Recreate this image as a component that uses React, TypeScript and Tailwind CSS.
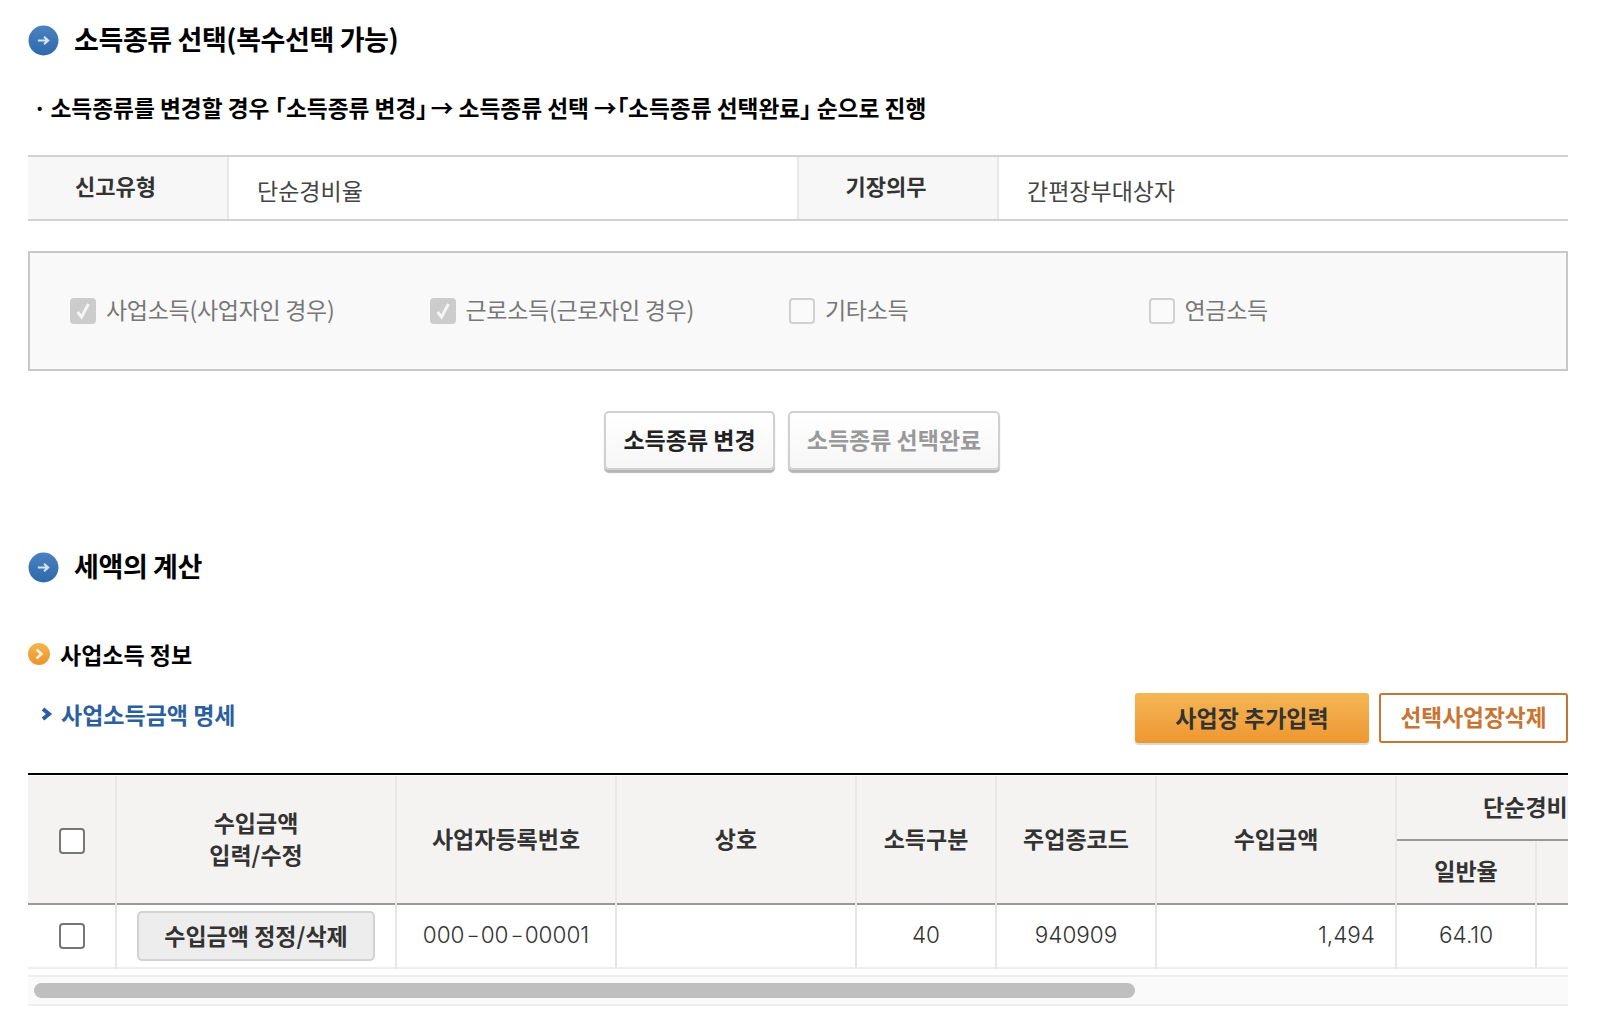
const FONT = "font-['Noto_Sans_CJK_KR','Noto_Sans',sans-serif]"
const NUM = "font-['Inter','Noto_Sans_CJK_KR',sans-serif] text-[22.5px] font-light"

function BlueBullet() {
  return (
    <svg width="31" height="31" viewBox="0 0 30 30" className="shrink-0">
      <defs>
        <linearGradient id="bb" x1="0" y1="0" x2="0" y2="1">
          <stop offset="0" stopColor="#4a82c0" />
          <stop offset="1" stopColor="#2f69ab" />
        </linearGradient>
      </defs>
      <circle cx="15" cy="15" r="14.5" fill="url(#bb)" />
      <path d="M9.5 15h10M15.5 11.5l4 3.5-4 3.5" fill="none" stroke="#d5e4f3" strokeWidth="2" />
    </svg>
  )
}

function OrangeBullet() {
  return (
    <svg width="22" height="22" viewBox="0 0 22 22" className="shrink-0">
      <defs>
        <linearGradient id="ob" x1="0" y1="0" x2="0" y2="1">
          <stop offset="0" stopColor="#f3b54e" />
          <stop offset="1" stopColor="#ec9430" />
        </linearGradient>
      </defs>
      <circle cx="11" cy="11" r="11" fill="url(#ob)" />
      <path d="M8.5 6.5l5 4.5-5 4.5" fill="none" stroke="#fff4dc" strokeWidth="2.4" />
    </svg>
  )
}

function Check({ checked, disabled }: { checked?: boolean; disabled?: boolean }) {
  if (disabled) {
    return checked ? (
      <span className="flex h-[26px] w-[26px] shrink-0 items-center justify-center rounded-[4px] bg-[#cccccc]">
        <svg width="16" height="18" viewBox="0 0 16 18">
          <path d="M2.5 10l4 5 7-13" fill="none" stroke="#f4f4f4" strokeWidth="3" />
        </svg>
      </span>
    ) : (
      <span className="h-[26px] w-[26px] shrink-0 rounded-[4px] border-2 border-[#d0d0d0] bg-[#fafafa]" />
    )
  }
  return <span className="block h-[26px] w-[26px] rounded-[4px] border-2 border-[#767676] bg-white" />
}

// half-width punctuation, the corner brackets and the dot are narrow in the picture
function Br({ c }: { c: string }) {
  return <span className="[font-feature-settings:'palt']">{c}</span>
}

function Dash() {
  return <span className="mx-[3px] inline-block scale-x-[1.3]">-</span>
}

const KINDS = [
  { label: '사업소득(사업자인 경우)', checked: true },
  { label: '근로소득(근로자인 경우)', checked: true },
  { label: '기타소득', checked: false },
  { label: '연금소득', checked: false },
]

const TH = 'border-r-2 border-[#e8e8e8] bg-[#f4f3f2] pb-[4px] text-center text-[23px] font-bold text-[#333333] leading-[32px]'
const TD = 'border-r-2 border-[#e6e6e6] text-[#333333]'

export default function App() {
  return (
    <div className={`${FONT} min-h-screen w-[1614px] overflow-hidden bg-white pl-[28px] pr-[46px] pt-[20px] text-black`}>
      <div className="flex h-[40px] items-center gap-[15px]">
        <BlueBullet />
        <h2 className="pb-[2px] text-[27px] font-bold leading-[36px] tracking-[-0.4px]">소득종류 선택(복수선택 가능)</h2>
      </div>

      <p className="mt-[30px] h-[36px] pl-[5px] text-[22.7px] font-bold leading-[36px]">
        <Br c="·" /><span className="ml-[4px]">소득종류를</span> 변경할 경우 <Br c="「" />소득종류 변경<Br c="」" /><span className="ml-[3px]">→</span> 소득종류 선택 →<Br c="「" />소득종류 선택완료<Br c="」" /> 순으로 진행
      </p>

      <div className="mt-[29px] flex h-[66px] border-y-2 border-[#d2d2d2]">
        <div className="flex w-[201px] items-center justify-center border-r-2 border-[#e8e8e8] bg-[#f7f7f7] pb-[6px] pr-[24px] text-[22px] font-bold text-[#333333]">신고유형</div>
        <div className="flex w-[568px] items-center pl-[28px] pt-[5px] text-[23px] text-[#444444]">단순경비율</div>
        <div className="flex w-[202px] items-center justify-center border-x-2 border-[#e8e8e8] bg-[#f7f7f7] pb-[6px] pr-[24px] text-[22px] font-bold text-[#333333]">기장의무</div>
        <div className="flex flex-1 items-center pl-[28px] pt-[5px] text-[23px] text-[#444444]">간편장부대상자</div>
      </div>

      <div className="mt-[30px] flex h-[120px] items-center border-2 border-[#c8c8c8] bg-[#f9f9f9] pl-[40px]">
        {KINDS.map((k) => (
          <label key={k.label} className="flex w-[359.5px] items-center gap-[10px]">
            <Check checked={k.checked} disabled />
            <span className="relative -top-[2px] text-[23px] tracking-[-0.3px] text-[#777777]">{k.label}</span>
          </label>
        ))}
      </div>

      <div className="mt-[40px] flex justify-center gap-[13px] pl-[8px]">
        <button className="h-[59px] w-[171px] rounded-[5px] border-2 border-[#d0d0d0] bg-gradient-to-b from-white to-[#f6f6f6] pb-[2px] text-[23px] font-bold text-[#222222] shadow-[0_3px_1px_#b5b5b5]">소득종류 변경</button>
        <button className="h-[59px] w-[212px] rounded-[5px] border-2 border-[#d0d0d0] bg-gradient-to-b from-white to-[#f6f6f6] pb-[2px] text-[23px] font-bold text-[#999999] shadow-[0_3px_1px_#b5b5b5]">소득종류 선택완료</button>
      </div>

      <div className="mt-[77px] flex h-[40px] items-center gap-[15px]">
        <BlueBullet />
        <h2 className="pb-[2px] text-[27px] font-bold leading-[36px] tracking-[-0.4px]">세액의 계산</h2>
      </div>

      <div className="mt-[52px] flex h-[30px] items-center gap-[10px]">
        <OrangeBullet />
        <h3 className="text-[23px] font-bold">사업소득 정보</h3>
      </div>

      <div className="mt-[24px] flex h-[50px] items-start justify-between">
        <div className="flex items-center gap-[8px] pl-[13px]">
          <svg width="12" height="14" viewBox="0 0 12 14">
            <path d="M2 2l6 5-6 5" fill="none" stroke="#2b5f9e" strokeWidth="4" />
          </svg>
          <span className="text-[23px] font-bold leading-[42px] text-[#2b5f9e]">사업소득금액 명세</span>
        </div>
        <div className="flex gap-[10px]">
          <button className="h-[50px] w-[234px] rounded-[3px] bg-gradient-to-b from-[#f4b654] to-[#ee9731] pb-[2px] text-[23px] font-bold text-[#333333] shadow-[0_2px_1px_#d8d8d8]">사업장 추가입력</button>
          <button className="h-[50px] w-[189px] rounded-[3px] border-2 border-[#c87533] bg-white pb-[2px] text-[22.7px] font-bold text-[#c87533]">선택사업장삭제</button>
        </div>
      </div>

      <div className="mt-[30px] overflow-hidden border-t-2 border-black pt-[1px]">
        <table className="w-[1648px] table-fixed border-collapse">
          <colgroup>
            <col className="w-[88px]" />
            <col className="w-[280px]" />
            <col className="w-[220px]" />
            <col className="w-[240px]" />
            <col className="w-[140px]" />
            <col className="w-[160px]" />
            <col className="w-[240px]" />
            <col className="w-[140px]" />
            <col className="w-[140px]" />
          </colgroup>
          <thead>
            <tr className="h-[64px]">
              <th rowSpan={2} className={TH}>
                <span className="mt-[6px] flex justify-center"><Check /></span>
              </th>
              <th rowSpan={2} className={TH}>수입금액<br />입력/수정</th>
              <th rowSpan={2} className={TH}>사업자등록번호</th>
              <th rowSpan={2} className={TH}>상호</th>
              <th rowSpan={2} className={TH}>소득구분</th>
              <th rowSpan={2} className={TH}>주업종코드</th>
              <th rowSpan={2} className={TH}>수입금액</th>
              <th colSpan={2} className={`${TH} border-b-2 border-b-[#999999]`}>단순경비율</th>
            </tr>
            <tr className="h-[64px]">
              <th className={TH}>일반율</th>
              <th className={TH}></th>
            </tr>
          </thead>
          <tbody>
            <tr className="h-[64px] border-y-2 border-t-[#999999] border-b-[#eeeeee]">
              <td className={TD}><span className="flex justify-center"><Check /></span></td>
              <td className={`${TD} text-center`}>
                <button className="h-[50px] w-[238px] rounded-[5px] border-2 border-[#d2d2d2] bg-[#eeeded] pb-[2px] text-[23px] font-bold text-[#333333]">수입금액 정정/삭제</button>
              </td>
              <td className={`${TD} ${NUM} pb-[2px] text-center`}>000<Dash />00<Dash />00001</td>
              <td className={TD}></td>
              <td className={`${TD} ${NUM} pb-[2px] text-center`}>40</td>
              <td className={`${TD} ${NUM} pb-[2px] text-center`}>940909</td>
              <td className={`${TD} ${NUM} pb-[2px] pr-[20px] text-right`}>1,494</td>
              <td className={`${TD} ${NUM} pb-[2px] text-center`}>64.10</td>
              <td className={TD}></td>
            </tr>
          </tbody>
        </table>
      </div>

      <div className="mt-[6px] h-[31px] border-y-2 border-[#eeeeee] bg-[#fafafa] pl-[6px] pt-[6px]">
        <div className="h-[15px] w-[1101px] rounded-full bg-[#bfbfbf]" />
      </div>
    </div>
  )
}
